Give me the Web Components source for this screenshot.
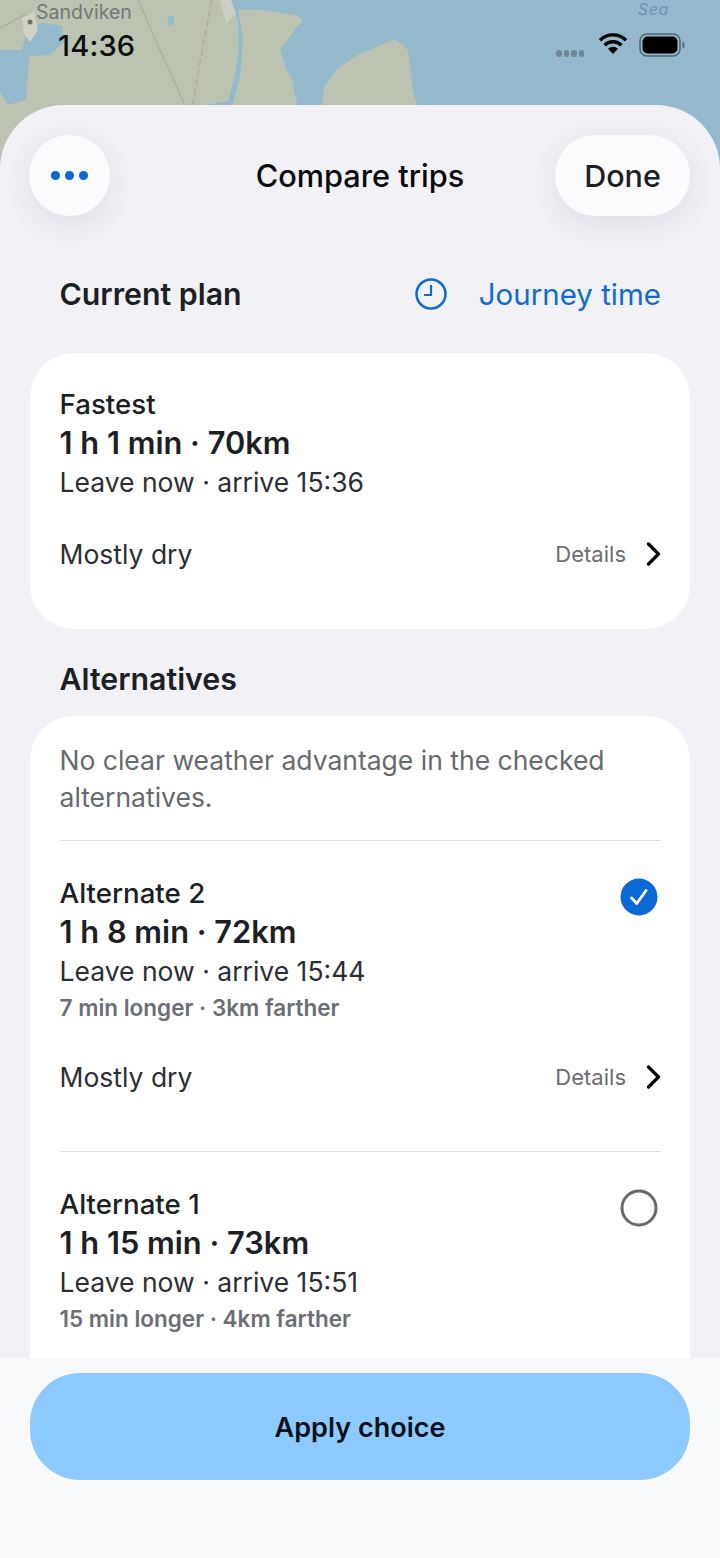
<!DOCTYPE html>
<html>
<head>
<meta charset="utf-8">
<style>
  html, body { margin: 0; padding: 0; height: 100%; }
  body { font-family: Inter, "Noto Sans", sans-serif; color: #1c1f24; overflow: hidden; }
</style>
</head>
<body>
<trip-app>
  <trip-card slot="current">
    <trip-option label="Fastest" summary="1 h 1 min · 70km" times="Leave now · arrive 15:36" weather="Mostly dry"></trip-option>
  </trip-card>
  <trip-card slot="alternatives" class="alts">
    <p-note>No clear weather advantage in the checked alternatives.</p-note>
    <trip-option divided radio="on" label="Alternate 2" summary="1 h 8 min · 72km" times="Leave now · arrive 15:44" delta="7 min longer · 3km farther" weather="Mostly dry"></trip-option>
    <trip-option divided radio="off" label="Alternate 1" summary="1 h 15 min · 73km" times="Leave now · arrive 15:51" delta="15 min longer · 4km farther" weather="Mostly dry"></trip-option>
  </trip-card>
</trip-app>

<script>
class MapBackdrop extends HTMLElement {
	connectedCallback() {
		this.attachShadow({ mode: "open" }).innerHTML = `
    <style>
      :host { display: block; position: absolute; left: 0; top: 0; width: 720px; height: 170px; overflow: hidden; background: #94b9cd; }
      svg { display: block; filter: blur(.5px); }
      span { position: absolute; top: 0; line-height: normal; }
      .town { left: 36px; font-size: 19.500px; color: #74787a; }
      .sea { left: 638px; color: #6f93ad; font-style: italic; font-size: 15.500px; letter-spacing: 1px; }
    </style>
    <svg width="720" height="170" viewBox="0 0 720 170">
      <path fill="#bcc4b1" d="M0 0H228L232 8L238 9L262 10L298 16L303 21L296 28L280 50L286 68L292 80L298 108L310 112L322 108L324 87L337 69L358 55L395 39L408 50L413 92L427 133L428 170H0Z"/>
      <path fill="#94b9cd" d="M232 8L238 20L239 50L234 78L228 101L206 105L208 142L228 145L232 105L240 78L243 40L238 9Z"/>
      <path fill="#94b9cd" d="M28 26L44 23L62 26L64 42L50 55L30 56L28 72L26 100L8 105L0 92V50L22 50Z"/>
      <path fill="#94b9cd" d="M167 17L174 16L174 24L169 26Z"/>
      <path fill="#bcc4b1" d="M524 104L532 116L526 120L520 112Z M524 122L534 130L540 170H520L522 134Z"/>
      <path fill="#d3d2c7" d="M22 18L34 12L38 30L30 42L24 34Z"/>
      <path fill="#ccd0c2" d="M220 0H231L236 14L226 24Z"/>
      <path fill="none" stroke="#aeb0a2" stroke-width="1.500" d="M0 28L26 14 M138 0L160 50L190 116L216 146"/>
      <path fill="none" stroke="#bfa6a6" stroke-width="1.500" stroke-dasharray="7 3" d="M212 0L204 40L190 120V150"/>
      <circle cx="30" cy="22" r="2.500" fill="#6e7172"/>
      <path fill="#c9cec0" d="M294 102L300 116H287Z"/>
    </svg>
    <span class="town">Sandviken</span>
    <span class="sea">Sea</span>
		`;
	}
}
customElements.define("map-backdrop", MapBackdrop);

class StatusBar extends HTMLElement {
	connectedCallback() {
		this.attachShadow({ mode: "open" }).innerHTML = `
    <style>
      :host { display: flex; position: absolute; left: 0; top: 0; width: 720px; height: 90px; box-sizing: border-box; padding: 29px 35px 0 58px; justify-content: space-between; }
      .time { font-size: 29px; line-height: 34px; font-weight: 500; color: #0b0d0e; letter-spacing: 0.2px; }
      .icons { display: flex; align-items: center; height: 32px; }
      .dots { display: flex; gap: 2px; margin: 16px 14px 0 0; }
      .dots i { width: 5.500px; height: 7px; border-radius: 3px; background: #6f8694; }
      .wifi { margin-right: 11px; }
    </style>
    <div class="time">14:36</div>
    <div class="icons">
      <div class="dots"><i></i><i></i><i></i><i></i></div>
      <svg class="wifi" width="30" height="32" viewBox="0 0 30 32">
        <path d="M15 25L10 19.800A7 7 0 0 1 20 19.800Z" fill="#000"/>
        <path d="M6.600 16.200A12 12 0 0 1 23.400 16.200" fill="none" stroke="#000" stroke-width="3.400"/>
        <path d="M2 11.200A18.500 18.500 0 0 1 28 11.200" fill="none" stroke="#000" stroke-width="3.400"/>
      </svg>
      <svg width="46" height="24" viewBox="0 0 46 24">
        <rect x="1" y="1" width="40" height="22" rx="7" fill="none" stroke="#4f6470" stroke-width="1.500"/>
        <rect x="3.500" y="3.500" width="35" height="17" rx="5" fill="#000"/>
        <path d="M43.500 8.500C45 9 45.500 10.500 45.500 12S45 15 43.500 15.500Z" fill="#4f6470"/>
      </svg>
    </div>
		`;
	}
}
customElements.define("status-bar", StatusBar);

class SheetHeader extends HTMLElement {
	connectedCallback() {
		this.attachShadow({ mode: "open" }).innerHTML = `
    <style>
      :host { display: grid; grid-template-columns: 1fr auto 1fr; align-items: center; padding: 30px 30px 0; }
      .btn { display: flex; align-items: center; justify-content: center; height: 81px; background: #fbfbfe; box-shadow: 0 8px 30px rgba(40,45,70,.09); }
      .more { width: 81px; margin-left: -1px; border-radius: 50%; gap: 5.500px; justify-self: start; }
      .more i { width: 8.500px; height: 8.500px; border-radius: 50%; background: #0a69d0; }
      .done { width: 135px; border-radius: 40px; font-size: 30.500px; font-weight: 500; color: #1c1f24; justify-self: end; }
      h1 { margin: 0; font-size: 30.700px; font-weight: 500; color: #08090b; }
    </style>
    <div class="btn more"><i></i><i></i><i></i></div>
    <h1>Compare trips</h1>
    <div class="btn done">Done</div>
		`;
	}
}
customElements.define("sheet-header", SheetHeader);

class PNote extends HTMLElement {
	connectedCallback() {
		this.attachShadow({ mode: "open" }).innerHTML = `
    <style>
      :host { display: block; margin-left: -.5px; padding: 26px 0 24px; font-size: 26.500px; line-height: 37px; color: #666a6f; }
    </style>
    <slot></slot>
		`;
	}
}
customElements.define("p-note", PNote);

class TripCard extends HTMLElement {
	connectedCallback() {
		this.attachShadow({ mode: "open" }).innerHTML = `
    <style>
      :host { display: block; margin: 0 30px; padding: 0 29px 0 30px; background: #fff; border-radius: 44px; }
    </style>
    <slot></slot>
		`;
	}
}
customElements.define("trip-card", TripCard);

class TripOption extends HTMLElement {
	connectedCallback() {
		let a = (n) => this.getAttribute(n) || "";
		let radio = "";
		if (a("radio") == "on") {
			radio = `<svg class="radio" width="38" height="38" viewBox="0 0 38 38"><circle cx="19" cy="19" r="18.500" fill="#0a69d5"/><path d="M11.500 20L16.800 25.500L26 12.500" fill="none" stroke="#fff" stroke-width="2.800" stroke-linecap="round" stroke-linejoin="round"/></svg>`;
		} else if (a("radio") == "off") {
			radio = `<svg class="radio" width="38" height="38" viewBox="0 0 38 38"><circle cx="19" cy="19" r="17" fill="none" stroke="#666a6f" stroke-width="3"/></svg>`;
		}
		this.attachShadow({ mode: "open" }).innerHTML = `
    <style>
      :host { display: block; position: relative; padding: 34px 0 57px; }
      :host([divided]) { border-top: 1.500px solid #dfe0e3; padding-top: 34.500px; padding-bottom: 56px; }
      :host([radio="off"]) { padding-top: 35px; }
      .text { margin-left: -.5px; }
      .label { font-size: 27.700px; line-height: 34px; font-weight: 500; color: #1c1f24; }
      .summary { font-size: 30.800px; line-height: 44px; font-weight: 600; color: #1c1f24; }
      .times { font-size: 26.500px; line-height: 35px; color: #2b2e33; }
      .delta { font-size: 22.500px; line-height: 38px; font-weight: 600; color: #6b6e73; }
      .row { display: flex; align-items: center; justify-content: space-between; margin: 36px 0 0 -.5px; height: 36px; font-size: 26.500px; color: #2b2e33; }
      .details { display: flex; align-items: center; gap: 20px; font-size: 22px; color: #6b6e73; }
      .radio { position: absolute; right: 3px; top: 37px; }
      :host([radio]) .row { margin-top: 32px; }
    </style>
    <div class="text">
      <div class="label">${a("label")}</div>
      <div class="summary">${a("summary")}</div>
      <div class="times">${a("times")}</div>
      ${a("delta") ? `<div class="delta">${a("delta")}</div>` : ""}
    </div>
    <div class="row">
      <span>${a("weather")}</span>
      <span class="details">Details
        <svg width="15" height="24" viewBox="0 0 15 24"><path d="M2.500 2L12.500 12L2.500 22" fill="none" stroke="#000" stroke-width="3.200" stroke-linecap="round" stroke-linejoin="round"/></svg>
      </span>
    </div>
    ${radio}
		`;
	}
}
customElements.define("trip-option", TripOption);

class TripApp extends HTMLElement {
	connectedCallback() {
		this.attachShadow({ mode: "open" }).innerHTML = `
    <style>
      :host { display: block; position: relative; width: 720px; height: 1558px; overflow: hidden; }
      .sheet { position: absolute; left: 0; top: 105px; width: 720px; height: 1453px; display: flex; flex-direction: column; background: #f1f1f6; border-radius: 64px 64px 0 0; overflow: hidden; }
      .scroll { flex: 1; min-height: 0; overflow: hidden; }
      .section { display: flex; align-items: center; justify-content: space-between; padding: 0 59px 0 59.500px; font-size: 30.300px; font-weight: 600; color: #1c1f24; }
      .plan { margin-top: 52.500px; height: 50px; margin-bottom: 34.500px; }
      .alt-head { margin-top: 25px; height: 50px; margin-bottom: 12px; }
      .time-pick { display: flex; align-items: center; gap: 32px; font-size: 29.500px; font-weight: 400; color: #0f6ccf; }
      .bar { flex: none; height: 200px; box-sizing: border-box; padding: 15px 30px 0; background: #f8f9fb; }
      .apply { height: 107px; padding-top: 1px; box-sizing: border-box; border-radius: 50px; background: #8ccaff; display: flex; align-items: center; justify-content: center; font-size: 27px; font-weight: 600; color: #08101c; }
    </style>
    <map-backdrop></map-backdrop>
    <status-bar></status-bar>
    <div class="sheet">
      <sheet-header></sheet-header>
      <div class="scroll">
        <div class="section plan">
          <span>Current plan</span>
          <span class="time-pick">
            <svg width="32" height="32" viewBox="0 0 32 32"><circle cx="16" cy="16" r="14.500" fill="none" stroke="#0f6ccf" stroke-width="2.500"/><path d="M16 7V17H9" fill="none" stroke="#0f6ccf" stroke-width="2.200"/></svg>
            Journey time
          </span>
        </div>
        <slot name="current"></slot>
        <div class="section alt-head">Alternatives</div>
        <slot name="alternatives"></slot>
      </div>
      <div class="bar"><div class="apply">Apply choice</div></div>
    </div>
		`;
	}
}
customElements.define("trip-app", TripApp);
</script>
</body>
</html>
